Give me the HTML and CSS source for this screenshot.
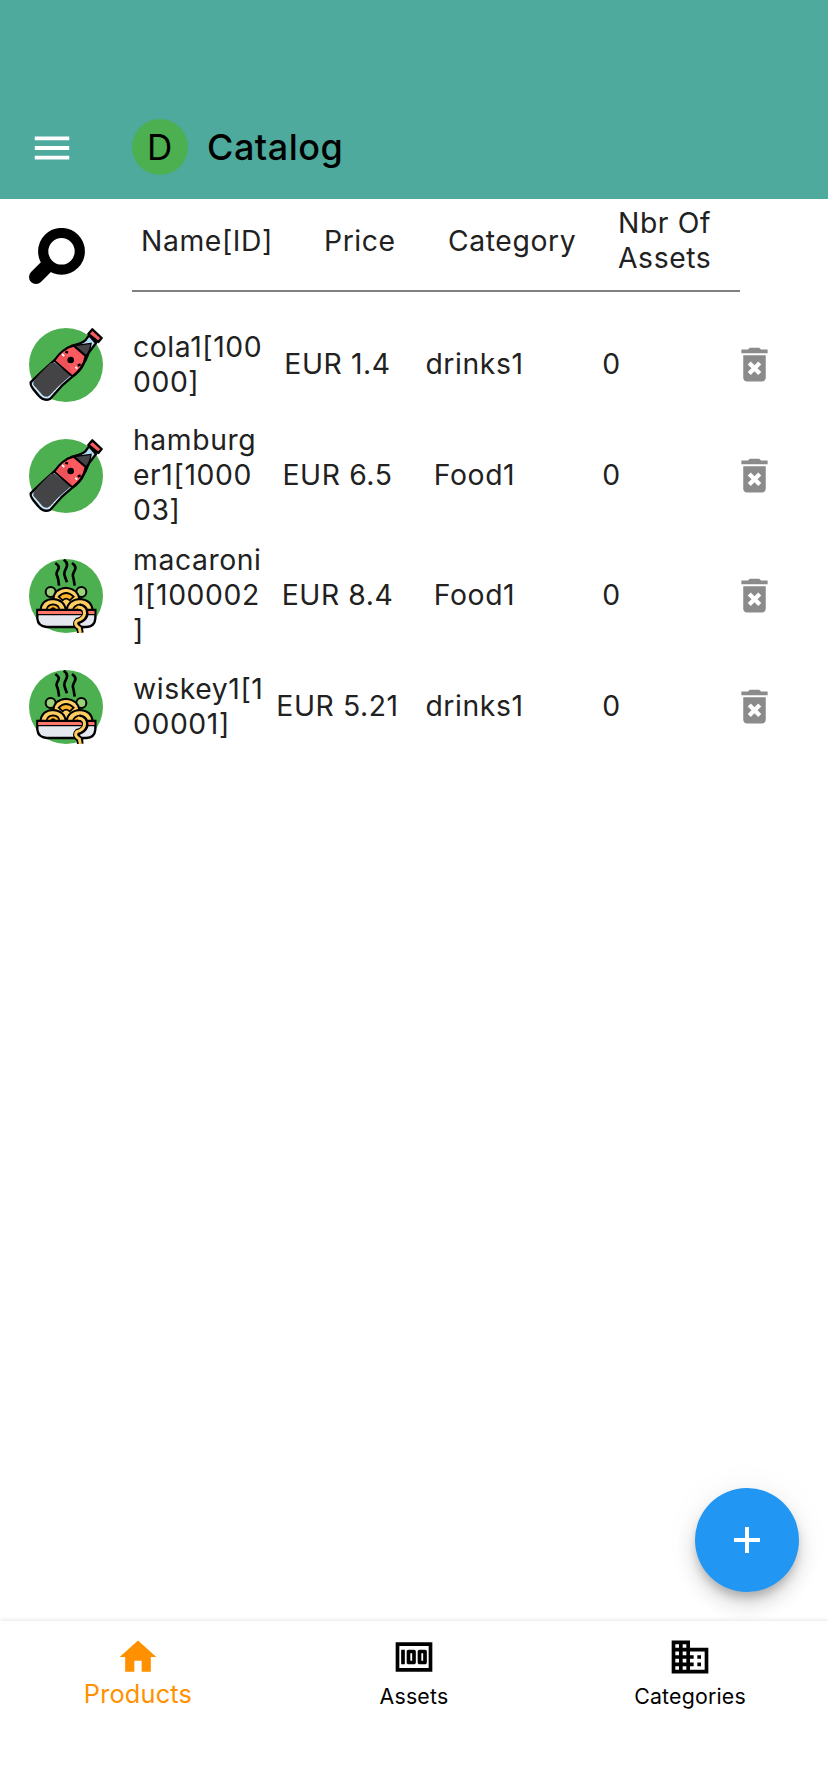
FILE: index.html
```
<!DOCTYPE html>
<html lang="en">
<head>
<meta charset="utf-8">
<title>Catalog</title>
<link rel="stylesheet" href="styles.css">
</head>
<body>
<svg width="0" height="0" class="defs" aria-hidden="true">
  <symbol id="cola" viewBox="27 38 222 222">
    <circle cx="138" cy="149" r="111" fill="#4caf50"/>
    <path d="M207 60L196 75C184 85 172 87 157 91C135 99 122 113 105 133C85 151 58 175 32 201C30 215 45 226 55 240C66 253 78 257 91 250L127 210L157 184C175 172 185 159 192 143C200 130 201 122 207 111L228 83Z" fill="#b4dcf4" stroke="#000" stroke-width="7" stroke-linejoin="round"/>
    <path d="M92 143C75 160 57 176 41 198L40 208L68 240Q80 249 90 240L122 207L153 180L104 142Z" fill="#444346"/>
    <path d="M162 91Q183 88 213 84Q211 107 198 122Z" fill="#444346" stroke="#000" stroke-width="4"/>
    <path d="M103 136Q126 99 161 91L197 122Q190 160 157 183Z" fill="#fb5a60" stroke="#000" stroke-width="6"/>
    <path d="M109 136Q119 119 132 110L142 128L145 147L157 177Z" fill="#ec5258"/>
    <path d="M217 42L245 68L235 80L205 56Z" fill="#fb5a60" stroke="#000" stroke-width="7" stroke-linejoin="round"/>
    <circle cx="152" cy="134" r="10"/>
    <path d="M136 109l8 3M173 151l9-4" stroke="#000" stroke-width="7"/>
    <path d="M126 116l7 6M166 155l6 5" stroke="#fff" stroke-width="5"/>
    <path d="M36 206L64 240Q78 252 91 241L118 212" fill="none" stroke="#e4f3fc" stroke-width="3" stroke-dasharray="8 3"/>
  </symbol>
  <symbol id="pasta" viewBox="27 42 222 222">
    <circle cx="138" cy="153" r="111" fill="#4caf50"/>
    <path d="M106 54q15 10 8 20t-3 18t6 30M131 44q15 10 8 24t-6 20t8 24M156 54q15 10 8 22t-5 18t5 28" fill="none" stroke="#000" stroke-width="8"/>
    <g fill="#9bd17b" stroke="#000" stroke-width="6"><circle cx="92" cy="141" r="15"/><circle cx="184" cy="141" r="15"/></g>
    <path d="M100 161Q103 131 138 128Q173 131 178 161L160 190H118Z" fill="#ffce62" stroke="#000" stroke-width="6"/>
    <path d="M116 155Q138 133 161 155L149 166Q138 156 128 166Z" fill="#ffb42e" stroke="#000" stroke-width="5"/>
    <path d="M61 196Q65 163 99 162Q133 164 138 196Z M139 196Q145 163 181 162Q215 165 218 196Z" fill="#ffce62" stroke="#000" stroke-width="6"/>
    <path d="M79 196Q82 179 99 178Q117 179 119 196M158 196Q162 180 181 178Q200 182 201 196" fill="#ffb42e" stroke="#000" stroke-width="5"/>
    <path d="M92 195Q99 184 107 195M171 195Q180 186 187 195" fill="none" stroke="#000" stroke-width="5"/>
    <path d="M52 195H226V221Q224 245 199 246H80Q54 244 52 221Z" fill="#e5e8ef" stroke="#000" stroke-width="7"/>
    <path d="M55 198H223V207H55Z" fill="#ff7769"/>
    <path d="M54 209H224" stroke="#000" stroke-width="4"/>
    <path d="M178 187Q199 190 195 211Q190 224 173 228Q163 238 179 250L181 264" fill="none" stroke="#000" stroke-width="20"/>
    <path d="M174 187Q197 187 193 209Q188 222 171 227Q160 238 178 249L181 264" fill="none" stroke="#ffce62" stroke-width="9"/>
  </symbol>
  <symbol id="trash" viewBox="0 0 24 24">
    <path fill="#8b8b8b" d="M6 19c0 1.100.9 2 2 2h8c1.100 0 2-.9 2-2V7H6v12zM15.500 4l-1-1h-5l-1 1H5v2h14V4z"/>
    <path d="M9.200 11.200l5.600 5.600M14.800 11.200l-5.600 5.600" stroke="#fff" stroke-width="2.300"/>
  </symbol>
</svg>

<div class="app">
  <header class="bar">
    <svg class="menu" viewBox="0 0 24 24"><path fill="#fff" d="M3 18h18v-2H3v2zm0-5h18v-2H3v2zm0-7v2h18V6H3z"/></svg>
    <div class="avatar">D</div>
    <h1 class="title">Catalog</h1>
  </header>

  <main class="content">
    <div class="head">
      <svg class="search" viewBox="0 0 56 56"><circle cx="32.500" cy="23.300" r="18.300" fill="none" stroke="#000" stroke-width="10.200"/><path d="M17 39L7 49" stroke="#000" stroke-width="14" stroke-linecap="round"/></svg>
      <div class="columns">
        <span class="h-name">Name[ID]</span>
        <span class="h-price">Price</span>
        <span class="h-category">Category</span>
        <span class="h-assets">Nbr Of<br>Assets</span>
      </div>
    </div>
    <div class="row">
      <svg class="pic"><use href="#cola"/></svg>
      <span class="name">cola1[100<br>000]</span><span class="cell">EUR 1.4</span><span class="cell">drinks1</span><span class="cell">0</span>
      <svg class="trash"><use href="#trash"/></svg>
    </div>
    <div class="row">
      <svg class="pic"><use href="#cola"/></svg>
      <span class="name">hamburg<br>er1[1000<br>03]</span><span class="cell">EUR 6.5</span><span class="cell">Food1</span><span class="cell">0</span>
      <svg class="trash"><use href="#trash"/></svg>
    </div>
    <div class="row">
      <svg class="pic"><use href="#pasta"/></svg>
      <span class="name">macaroni<br>1[100002<br>]</span><span class="cell">EUR 8.4</span><span class="cell">Food1</span><span class="cell">0</span>
      <svg class="trash"><use href="#trash"/></svg>
    </div>
    <div class="row">
      <svg class="pic"><use href="#pasta"/></svg>
      <span class="name">wiskey1[1<br>00001]</span><span class="cell">EUR 5.21</span><span class="cell">drinks1</span><span class="cell">0</span>
      <svg class="trash"><use href="#trash"/></svg>
    </div>
  </main>

  <button class="fab" aria-label="Add"><svg viewBox="0 0 26 26"><path d="M13 0v26M0 13h26" stroke="#fff" stroke-width="4"/></svg></button>

  <nav class="nav">
    <a class="tab active"><svg viewBox="0 0 24 24"><path d="M10 20v-6h4v6h5v-8h3L12 3 2 12h3v8z"/></svg><span>Products</span></a>
    <a class="tab"><svg viewBox="0 0 24 24"><path fill-rule="evenodd" d="M5 8h2v8H5zM12 8H9c-.55 0-1 .45-1 1v6c0 .55.45 1 1 1h3c.55 0 1-.45 1-1V9c0-.55-.45-1-1-1zm-1 6h-1v-4h1v4zM18 8h-3c-.55 0-1 .45-1 1v6c0 .55.45 1 1 1h3c.55 0 1-.45 1-1V9c0-.55-.45-1-1-1zm-1 6h-1v-4h1v4zM2 4v16h20V4H2zm2 14V6h16v12H4z"/></svg><span>Assets</span></a>
    <a class="tab"><svg viewBox="0 0 24 24"><path d="M12 7V3H2v18h20V7H12zM6 19H4v-2h2v2zm0-4H4v-2h2v2zm0-4H4V9h2v2zm0-4H4V5h2v2zm4 12H8v-2h2v2zm0-4H8v-2h2v2zm0-4H8V9h2v2zm0-4H8V5h2v2zm10 12h-8v-2h2v-2h-2v-2h2v-2h-2V9h8v10zm-2-8h-2v2h2v-2zm0 4h-2v2h2v-2z"/></svg><span>Categories</span></a>
  </nav>
</div>
</body>
</html>
```
FILE: styles.css
```
* { box-sizing: border-box; }
body {
  margin: 0;
  background: #fff;
  color: #212121;
  font: 400 28.300px/35px Inter, "Liberation Sans", sans-serif;
  letter-spacing: 0.600px;
}
svg { display: block; flex: none; }
.defs { position: absolute; }
.app { position: relative; height: 1792px; display: flex; flex-direction: column; overflow: hidden; }

.bar {
  height: 199px;
  padding: 96px 0 0 29px;
  background: #4daa9c;
  color: #000;
  display: flex;
  align-items: center;
}
.menu { width: 46px; height: 46px; margin-top: 0; }
.avatar {
  width: 56px;
  height: 56px;
  margin: -1px 0 0 57px;
  border-radius: 50%;
  background: #4caf50;
  font-size: 35px;
  line-height: 56px;
  text-align: center;
}
.title { margin: -1px 0 0 19px; font-size: 36px; line-height: 44px; font-weight: 500; letter-spacing: 0.5px; }

.content { flex: 1; }
.head { height: 115px; padding-left: 29px; display: flex; align-items: flex-start; }
.search { width: 56px; height: 56px; margin-top: 29px; }
.columns {
  width: 608px;
  height: 93px;
  margin-left: 47px;
  padding-bottom: 7px;
  border-bottom: 2px solid #808080;
  display: grid;
  grid-template-columns: 184px 124px 169px 1fr;
  align-items: center;
  white-space: nowrap;
}
.h-name { padding-left: 9px; }
.h-price { padding-left: 8px; }
.h-category { padding-left: 8px; }
.h-assets { padding-left: 9px; }

.row {
  min-height: 102px;
  padding: 7px 0 8px 29px;
  display: grid;
  grid-template-columns: 104px 136px 137px 137px 137px 1fr;
  align-items: center;
  white-space: nowrap;
}
.pic { width: 74px; height: 74px; }
.cell { text-align: center; }
.trash { width: 45px; height: 45px; margin-left: 52px; }

.fab {
  position: absolute;
  left: 695px;
  top: 1488px;
  width: 104px;
  height: 104px;
  border: 0;
  border-radius: 50%;
  background: #2196f3;
  display: grid;
  place-items: center;
  box-shadow: 0 7px 10px -2px rgba(0,0,0,.2), 0 12px 20px rgba(0,0,0,.14), 0 2px 36px rgba(0,0,0,.06);
}
.fab svg { width: 26px; height: 26px; }

.nav {
  height: 171px;
  background: #fff;
  box-shadow: 0 -1px 4px rgba(0,0,0,.1);
  position: relative;
  display: grid;
  grid-template-columns: repeat(3, 1fr);
}
.tab { padding-top: 14px; display: flex; flex-direction: column; align-items: center; color: #000; font-size: 21.300px; letter-spacing: 0.2px; }
.tab svg { width: 44px; height: 44px; fill: currentColor; }
.tab span { line-height: 32px; margin-top: 1px; }
.tab.active { color: #ff9100; font-size: 25.300px; }
.tab.active span { margin-top: -1px; }
```
